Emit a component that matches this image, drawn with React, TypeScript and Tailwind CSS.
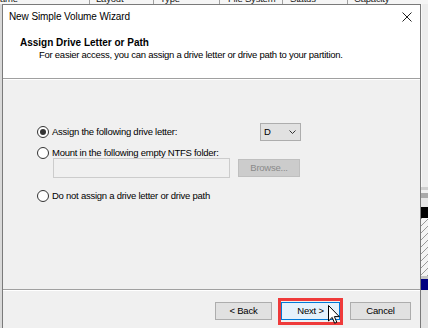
import React from "react";

function Radio({ checked }: { checked?: boolean }) {
  return (
    <div className="w-[12px] h-[12px] rounded-full border border-[#333333] bg-white flex items-center justify-center shrink-0">
      {checked && <div className="w-[6px] h-[6px] rounded-full bg-[#333333]" />}
    </div>
  );
}

function Btn({ w, label, primary }: { w: string; label: string; primary?: boolean }) {
  return (
    <div
      className={
        "h-[18px] flex items-center justify-center text-[9.5px] tracking-[-0.2px] border " +
        w +
        (primary ? " bg-[#e5f1fb] border-[#0078d7]" : " bg-[#e1e1e1] border-[#adadad]")
      }
    >
      {label}
    </div>
  );
}

export default function App() {
  return (
    <div className="relative w-[428px] h-[328px] overflow-hidden bg-[#f0f0f0] flex flex-col font-['Liberation_Sans',Arial,sans-serif] text-black">
      {/* background table header */}
      <div className="h-[4px] overflow-hidden bg-[#f5f5f5] shrink-0">
        <div className="flex -mt-[7px] h-[12px] text-[9.5px] leading-[12px] text-[#1a1a1a] tracking-[-0.2px]">
          <div className="w-[90px] border-r border-[#a0a0a0]">ame</div>
          <div className="w-[64px] border-r border-[#a0a0a0] pl-[6px]">Layout</div>
          <div className="w-[66px] border-r border-[#a0a0a0] pl-[6px]">Type</div>
          <div className="w-[63px] border-r border-[#a0a0a0] pl-[8px]">File System</div>
          <div className="w-[65px] border-r border-[#a0a0a0] pl-[7px]">Status</div>
          <div className="pl-[6px]">Capacity</div>
        </div>
      </div>

      <div className="flex flex-1 min-h-0">
        {/* left sliver of background */}
        <div className="w-[2px] bg-[#d9d9d9] shrink-0" />

        {/* dialog */}
        <div className="w-[419px] shrink-0 border border-b-0 border-[#7a7a7a] bg-white flex flex-col">
          {/* white header */}
          <div className="h-[73px] shrink-0 flex flex-col">
            <div className="h-[24px] flex items-center justify-between pl-[6px] pr-[8px]">
              <span className="text-[10px] leading-[12px] tracking-[-0.1px]">New Simple Volume Wizard</span>
              <svg width="10" height="10" viewBox="0 0 10 10" className="shrink-0">
                <path d="M0.5 0.5 L9.5 9.5 M9.5 0.5 L0.5 9.5" stroke="#222" strokeWidth="1" fill="none" />
              </svg>
            </div>
            <div className="pl-[17px] mt-[8px] text-[10px] leading-[12px] font-bold">Assign Drive Letter or Path</div>
            <div className="pl-[36px] text-[9.5px] leading-[12px] tracking-[-0.26px]">
              For easier access, you can assign a drive letter or drive path to your partition.
            </div>
          </div>
          <div className="h-[2px] shrink-0 border-t border-b border-t-[#a0a0a0] border-b-white" />

          {/* body */}
          <div className="h-[209px] shrink-0 bg-[#f0f0f0] pl-[34px] pt-[43px] flex flex-col text-[9.5px] tracking-[-0.25px]">
            <div className="h-[18px] w-[264px] flex items-center">
              <Radio checked />
              <span className="ml-[3px]">Assign the following drive letter:</span>
              <div className="ml-auto w-[41px] h-[18px] bg-[#e1e1e1] border border-[#adadad] flex items-center justify-between pl-[3px] pr-[4px]">
                <span className="text-[9.5px]">D</span>
                <svg width="7" height="4" viewBox="0 0 7 4">
                  <path d="M0.5 0.5 L3.5 3.5 L6.5 0.5" stroke="#333" strokeWidth="1" fill="none" />
                </svg>
              </div>
            </div>
            <div className="h-[12px] mt-[6px] flex items-center">
              <Radio />
              <span className="ml-[3px]">Mount in the following empty NTFS folder:</span>
            </div>
            <div className="flex items-center ml-[16px] -mt-[1px] gap-[8px]">
              <div className="w-[177px] h-[20px] bg-[#f0f0f0] border border-[#cccccc]" />
              <div className="w-[62px] h-[18px] bg-[#cccccc] border border-[#bfbfbf] flex items-center justify-center text-[#8a8a8a]">
                Browse...
              </div>
            </div>
            <div className="h-[12px] mt-[12px] flex items-center">
              <Radio />
              <span className="ml-[3px]">Do not assign a drive letter or drive path</span>
            </div>
          </div>
          <div className="h-[2px] shrink-0 border-t border-b border-t-[#a0a0a0] border-b-white" />

          {/* footer */}
          <div className="flex-1 bg-[#f0f0f0] pt-[11px] pr-[9px] flex justify-end items-start">
            <Btn w="w-[57px]" label="< Back" />
            <div className="w-[9px]" />
            <Btn w="w-[59px]" label="Next >" primary />
            <div className="w-[10px]" />
            <Btn w="w-[61px]" label="Cancel" />
          </div>
        </div>

        {/* right sliver of background app */}
        <div className="w-[7px] shrink-0 flex flex-col">
          <div className="h-[183px] bg-[#ededed] border-l border-[#f8f8f8]" />
          <div className="h-[3px] bg-[#cfcfcf]" />
          <div className="h-[3px] bg-[#f0f0f0]" />
          <div className="h-[5px] bg-[#a9a9a9]" />
          <div className="h-[9px] bg-[#e6e6e6]" />
          <div className="h-[11px] bg-black" />
          <div className="h-[58px] bg-[repeating-linear-gradient(135deg,#9a9a9a_0px,#9a9a9a_1px,#f4f4f4_1px,#f4f4f4_5px)]" />
          <div className="h-[3px] bg-[#c4c4c4]" />
          <div className="h-[11px] bg-[#000080]" />
          <div className="flex-1 bg-[#e3e3e3]" />
        </div>
      </div>

      {/* red annotation box */}
      <div className="absolute left-[278px] top-[298px] w-[65px] h-[27px] border-[3px] border-[#ef3a3a]" />

      {/* mouse cursor */}
      <svg className="absolute left-[328px] top-[305px]" width="13" height="20" viewBox="0 0 13 20">
        <path
          d="M0.5 0.5 L0.5 16 L4.2 12.4 L6.6 18.2 L8.8 17.3 L6.4 11.6 L11.3 11.6 Z"
          fill="white"
          stroke="black"
          strokeWidth="1"
          strokeLinejoin="miter"
        />
      </svg>
    </div>
  );
}
